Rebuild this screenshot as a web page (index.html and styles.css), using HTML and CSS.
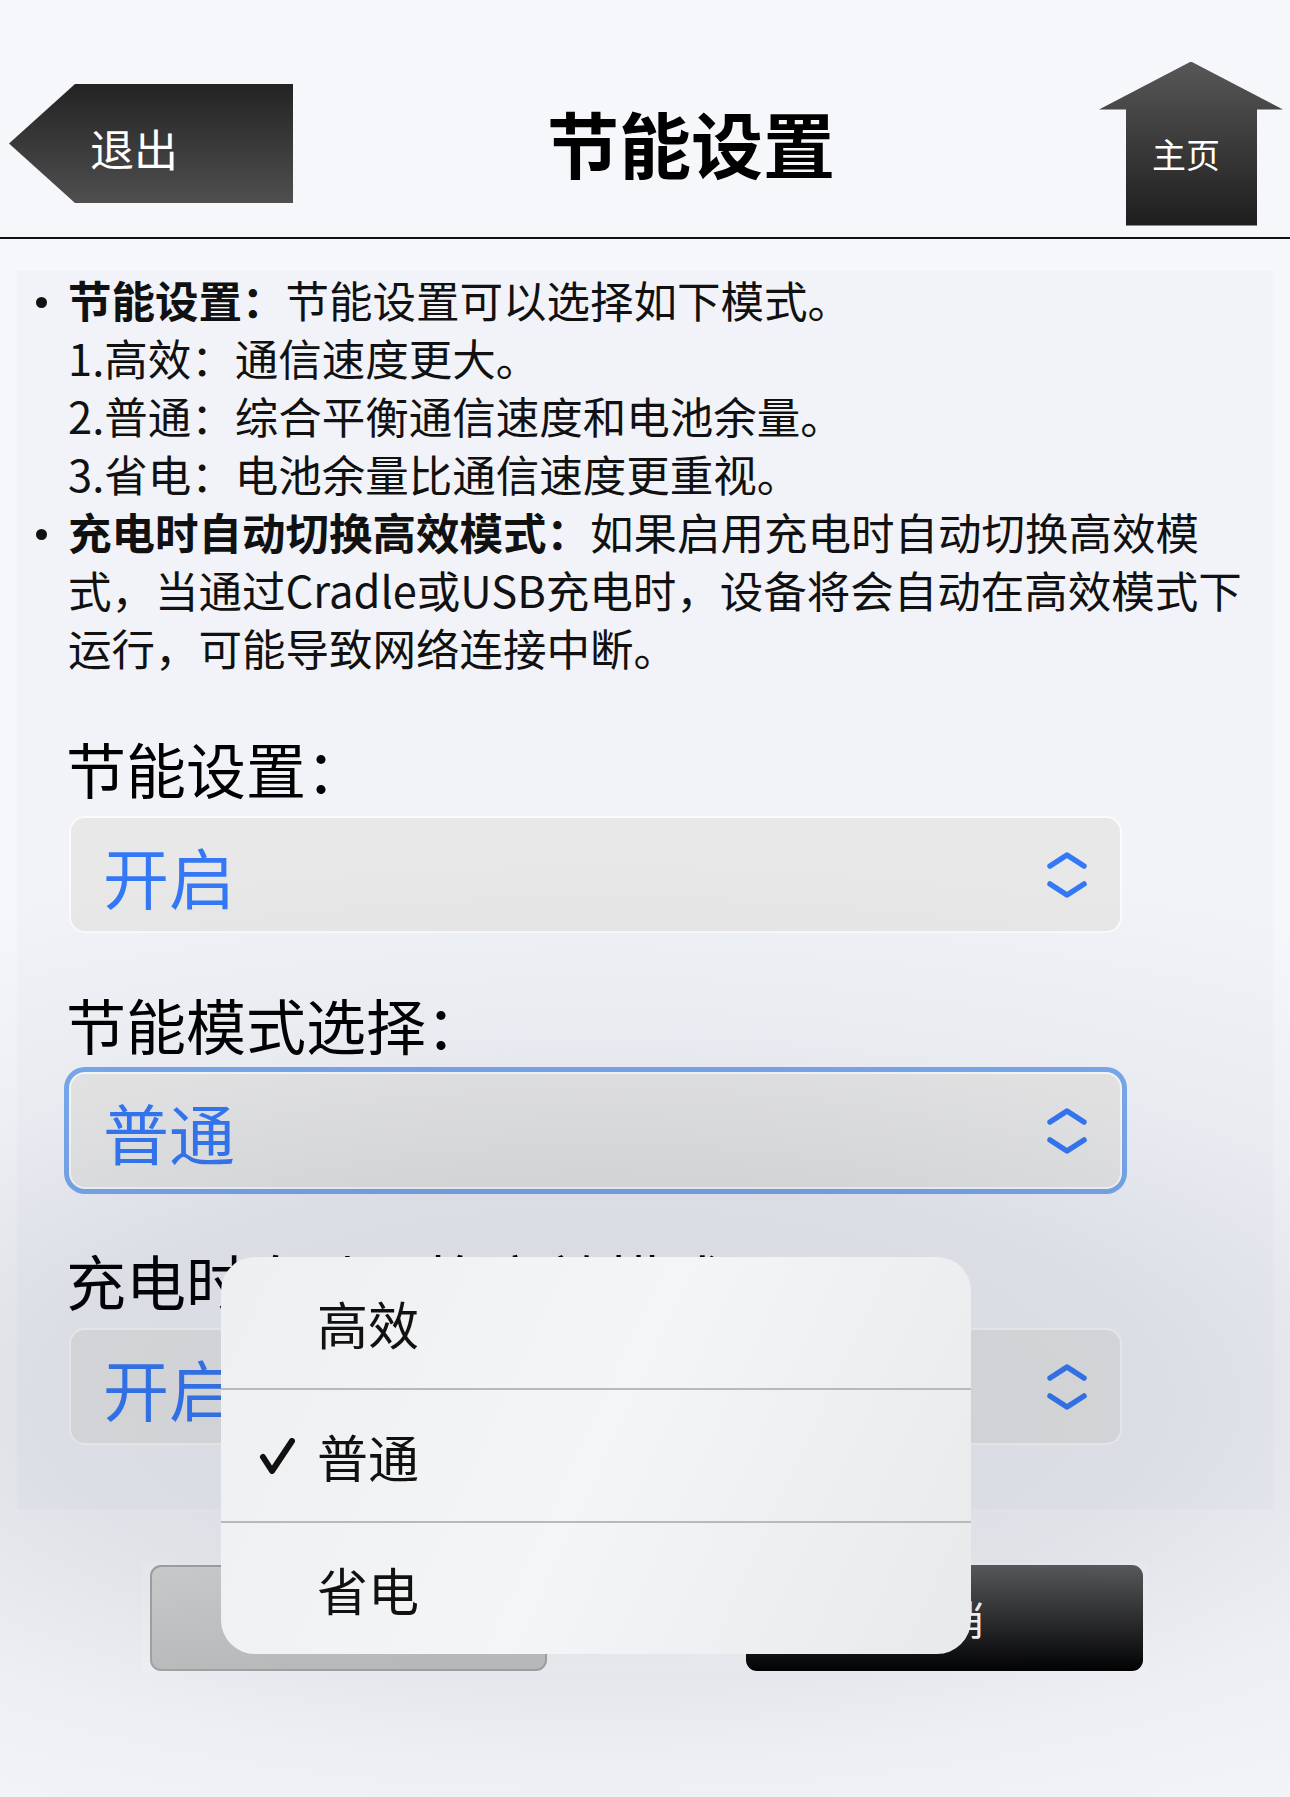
FILE: index.html
```html
<!DOCTYPE html>
<html lang="zh-CN">
<head>
<meta charset="utf-8">
<title>节能设置</title>
<link rel="stylesheet" href="styles.css">
</head>
<body>
<div class="page">
  <header class="topbar">
    <a class="btn-back">退出</a>
    <h1 class="title">节能设置</h1>
    <a class="btn-home">主页</a>
  </header>

  <main class="panel">
    <ul class="help">
      <li>
        <span class="dot"></span>
        <p><b>节能设置：</b>节能设置可以选择如下模式。<br>1.高效：通信速度更大。<br>2.普通：综合平衡通信速度和电池余量。<br>3.省电：电池余量比通信速度更重视。</p>
      </li>
      <li>
        <span class="dot"></span>
        <p><b>充电时自动切换高效模式：</b>如果启用充电时自动切换高效模式，当通过Cradle或USB充电时，设备将会自动在高效模式下运行，可能导致网络连接中断。</p>
      </li>
    </ul>

    <div class="field">
      <div class="label">节能设置：</div>
      <div class="select">
        <span class="value">开启</span>
        <svg class="chev" viewBox="0 0 40 46" width="40" height="46"><path d="M3 14 L20 3 L37 14 M3 32 L20 43 L37 32"/></svg>
      </div>
    </div>

    <div class="field">
      <div class="label">节能模式选择：</div>
      <div class="select focused">
        <span class="value">普通</span>
        <svg class="chev" viewBox="0 0 40 46" width="40" height="46"><path d="M3 14 L20 3 L37 14 M3 32 L20 43 L37 32"/></svg>
      </div>
    </div>

    <div class="field">
      <div class="label">充电时自动切换高效模式：</div>
      <div class="select">
        <span class="value">开启</span>
        <svg class="chev" viewBox="0 0 40 46" width="40" height="46"><path d="M3 14 L20 3 L37 14 M3 32 L20 43 L37 32"/></svg>
      </div>
    </div>
  </main>

  <div class="actions">
    <a class="btn btn-apply">应用</a>
    <a class="btn btn-cancel">取消</a>
  </div>

  <!-- dimming behind the open picker -->
  <div class="scrim"></div>

  <ul class="menu">
    <li class="item"><span class="check"></span><span>高效</span></li>
    <li class="item"><span class="check"><svg viewBox="0 0 36 36" width="36" height="36"><path d="M4 19 L13 33 L33 3"/></svg></span><span>普通</span></li>
    <li class="item"><span class="check"></span><span>省电</span></li>
  </ul>
</div>
</body>
</html>
```

FILE: styles.css
```css
html, body {
  margin: 0;
  padding: 0;
}

body {
  background: #f6f7fb;
  font-family: "Noto Sans CJK SC", "Noto Sans", sans-serif;
  color: #111;
}

.page {
  position: relative;
  width: 1290px;
  min-height: 1797px;
  overflow: hidden;
}

/* ---------- top bar ---------- */
.topbar {
  height: 187px;
  padding: 50px 7px 0 9px;
  border-bottom: 2px solid #111;
  display: flex;
  align-items: center;
}

.btn-back {
  flex: none;
  width: 284px;
  height: 119px;
  box-sizing: border-box;
  padding: 8px 0 0 81px;
  display: flex;
  align-items: center;
  color: #fff;
  font-size: 44px;
  background: linear-gradient(#232323, #4f4f4f);
  clip-path: polygon(0 50%, 66px 0, 100% 0, 100% 100%, 66px 100%);
}

.title {
  flex: 1;
  margin: -4px 0 0;
  text-align: center;
  font-size: 72px;
  font-weight: 700;
  line-height: 1;
  color: #000;
  padding-right: 10px;
}

.btn-home {
  flex: none;
  width: 184px;
  height: 164px;
  box-sizing: border-box;
  padding: 72px 10px 0 0;
  text-align: center;
  line-height: 40px;
  color: #fff;
  font-size: 34px;
  background: linear-gradient(#575757, #1e1e1e);
  clip-path: polygon(50% 0, 100% 48px, 158px 48px, 158px 100%, 27px 100%, 27px 48px, 0 48px);
}

/* ---------- content panel ---------- */
.panel {
  margin: 32px 17px 0;
  background: #f1f3f8;
  padding: 0 0 64px 0;
}

.help {
  list-style: none;
  margin: 0;
  padding: 0;
  font-size: 43.5px;
  line-height: 58px;
}

.help li {
  display: flex;
  align-items: flex-start;
}

.dot {
  flex: none;
  width: 11px;
  height: 11px;
  border-radius: 50%;
  background: #111;
  margin: 26px 21px 0 19px;
}

.help p {
  margin: 0 -5px 0 0;
  flex: 1;
}

.help b {
  font-weight: 700;
}

.field {
  margin-top: 56px;
  padding-left: 52px;
}

.label {
  font-size: 60px;
  line-height: 70px;
  margin: 0 0 13px -3px;
  color: #000;
}

.select {
  width: 1053px;
  height: 117px;
  box-sizing: border-box;
  border: 2px solid #fbfbfc;
  border-radius: 16px;
  background: #e8e8e8;
  display: flex;
  align-items: center;
  justify-content: space-between;
  padding: 0 33px 0 32px;
}

.select.focused {
  box-shadow: 0 0 0 5px #79a9ee;
}

.value {
  font-size: 66px;
  line-height: 1;
  color: #3478f6;
}

.chev path {
  fill: none;
  stroke: #3478f6;
  stroke-width: 5.5;
  stroke-linecap: round;
  stroke-linejoin: round;
}

/* ---------- buttons ---------- */
.actions {
  width: 1006px;
  margin: 53px auto 0;
  box-sizing: border-box;
  padding: 3px 5px 1px 8px;
  display: flex;
  justify-content: space-between;
  background: rgba(255, 255, 255, 0.3);
}

.btn {
  width: 397px;
  height: 106px;
  box-sizing: border-box;
  display: flex;
  align-items: center;
  justify-content: center;
  font-size: 40px;
  border-radius: 11px;
}

.btn-apply {
  color: #000;
  border: 2px solid #a8a8a8;
  background: linear-gradient(#d9d9d9, #c3c4c3);
}

.btn-cancel {
  color: #fff;
  background: linear-gradient(#5d5d5d, #000);
}

/* ---------- picker ---------- */
.scrim {
  position: absolute;
  inset: 0;
  z-index: 5;
  pointer-events: none;
  background: radial-gradient(ellipse 1400px 560px at 600px 1400px,
    rgba(25, 35, 60, 0.13) 0%,
    rgba(25, 35, 60, 0.10) 40%,
    rgba(25, 35, 60, 0.04) 65%,
    rgba(25, 35, 60, 0) 100%);
}

.menu {
  position: absolute;
  left: 221px;
  top: 1257px;
  width: 750px;
  margin: 0;
  padding: 0;
  list-style: none;
  border-radius: 34px;
  background: linear-gradient(115deg, #eeeff1 0%, #f4f5f6 50%, #e8e9eb 100%);
  overflow: hidden;
  z-index: 10;
}

.item {
  height: 131px;
  display: flex;
  align-items: center;
  font-size: 51px;
  color: #111;
}

.item + .item {
  border-top: 2px solid #b9b9bc;
}

.check {
  width: 36px;
  height: 36px;
  margin: 0 22px 0 38px;
  flex: none;
  display: flex;
}

.check svg {
  display: block;
}

.check path {
  fill: none;
  stroke: #111;
  stroke-width: 6;
  stroke-linecap: round;
  stroke-linejoin: round;
}
```
